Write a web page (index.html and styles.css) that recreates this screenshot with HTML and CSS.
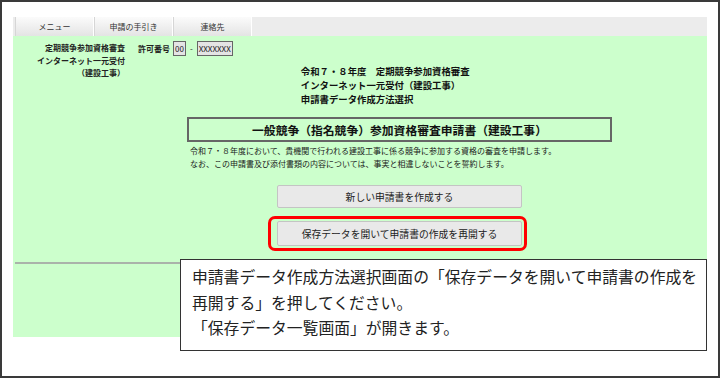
FILE: index.html
```html
<!DOCTYPE html>
<html lang="ja">
<head>
    <meta charset="UTF-8">
    <link rel="stylesheet" href="styles.css">
    <title>申請書データ作成方法選択</title>
</head>
<body>
    <div class="frame">
        <div class="shot">
            <nav class="menu-bar">
                <a class="tab" href="#">メニュー</a>
                <a class="tab" href="#">申請の手引き</a>
                <a class="tab" href="#">連絡先</a>
            </nav>

            <main class="content">
                <div class="top-row">
                    <div class="site-name">
                        定期競争参加資格審査<br>
                        インターネット一元受付<br>
                        （建設工事）
                    </div>
                    <div class="permit">
                        <span class="permit-label">許可番号</span>
                        <span class="permit-box">00</span>
                        <span class="permit-dash">-</span>
                        <span class="permit-box">XXXXXXX</span>
                    </div>
                    <div class="page-head">
                        令和７・８年度　定期競争参加資格審査<br>
                        インターネット一元受付（建設工事）<br>
                        申請書データ作成方法選択
                    </div>
                </div>

                <h2 class="form-title">一般競争（指名競争）参加資格審査申請書（建設工事）</h2>

                <p class="lead">
                    令和７・８年度において、貴機関で行われる建設工事に係る競争に参加する資格の審査を申請します。<br>
                    なお、この申請書及び添付書類の内容については、事実と相違しないことを誓約します。
                </p>

                <button class="action-button">新しい申請書を作成する</button>

                <div class="highlight">
                    <button class="action-button">保存データを開いて申請書の作成を再開する</button>
                </div>

                <hr class="divider">
            </main>
        </div>

        <!-- explanation balloon laid over the screenshot -->
        <div class="callout">
            申請書データ作成方法選択画面の「保存データを開いて申請書の作成を<br>
            再開する」を押してください。<br>
            「保存データ一覧画面」が開きます。
        </div>
    </div>
</body>
</html>
```

FILE: styles.css
```css
body {
    margin: 0;
    padding: 0;
    background-color: #ffffff;
    font-family: "Noto Sans CJK JP", "Noto Sans", sans-serif;
    color: #222222;
}

.frame {
    position: relative;
    width: 720px;
    height: 378px;
    box-sizing: border-box;
    border: 2px solid #3a3a3a;
    padding: 15px 0 0 11px;
    overflow: hidden;
}

.shot {
    width: 694px;
}

/* top menu */
.menu-bar {
    display: flex;
    height: 19px;
    background-color: #ececec;
    padding-left: 2px;
}

.tab {
    width: 77px;
    display: flex;
    align-items: center;
    justify-content: center;
    font-size: 8px;
    color: #333333;
    text-decoration: none;
    background: linear-gradient(#fbfbfb, #e4e4e4);
    border-right: 1px solid #ffffff;
    border-left: 1px solid #d6d6d6;
}

.content {
    background-color: #ccffcc;
    height: 301px;
    padding-top: 5px;
    box-sizing: border-box;
}

.top-row {
    display: flex;
    align-items: flex-start;
}

.site-name {
    width: 112px;
    margin-top: 1px;
    text-align: right;
    font-size: 8px;
    line-height: 12.5px;
    font-weight: bold;
}

.permit {
    display: flex;
    align-items: center;
    margin-left: 13px;
    font-size: 8px;
    font-weight: bold;
}

.permit-label {
    margin-right: 3px;
}

.permit-box {
    height: 15px;
    box-sizing: border-box;
    padding: 0 1px;
    border: 1px solid #666666;
    background-color: #e4e4e4;
    font-weight: normal;
    font-size: 8px;
    line-height: 13px;
    color: #222222;
}

.permit-dash {
    margin: 0 4px;
    font-weight: normal;
}

.page-head {
    margin: 23px 0 0 68px;
    font-size: 9.4px;
    line-height: 14px;
    font-weight: bold;
    color: #111111;
}

.form-title {
    width: 425px;
    height: 25px;
    box-sizing: border-box;
    margin: 11px 0 0 174px;
    border: 2px solid #666666;
    font-size: 11.8px;
    line-height: 21px;
    text-align: center;
    color: #111111;
}

.lead {
    margin: 2px 0 0 177px;
    font-size: 8px;
    line-height: 13px;
    color: #1a1a1a;
}

.action-button {
    display: block;
    width: 245px;
    height: 23px;
    margin: 15px 0 0 264px;
    padding: 0;
    border: 1px solid #c4c4c4;
    border-radius: 2px;
    background-color: #e9e9e9;
    font-family: inherit;
    font-size: 9.8px;
    color: #222222;
}

.highlight {
    width: 259px;
    height: 35px;
    box-sizing: border-box;
    margin: 8px 0 0 255px;
    padding: 2px 2px 0 6px;
    border: 3px solid #ff0000;
    border-radius: 7px;
}

.highlight .action-button {
    margin: 0;
    height: 25px;
}

.divider {
    margin: 11px 0 0 2px;
    border: none;
    border-top: 2px solid #aab3aa;
}

/* balloon */
.callout {
    position: absolute;
    left: 178px;
    top: 257px;
    width: 527px;
    height: 92px;
    box-sizing: border-box;
    padding: 4px 0 0 11px;
    border: 1px solid #333333;
    background-color: #ffffff;
    font-size: 15.8px;
    line-height: 25.5px;
    color: #222222;
}
```
